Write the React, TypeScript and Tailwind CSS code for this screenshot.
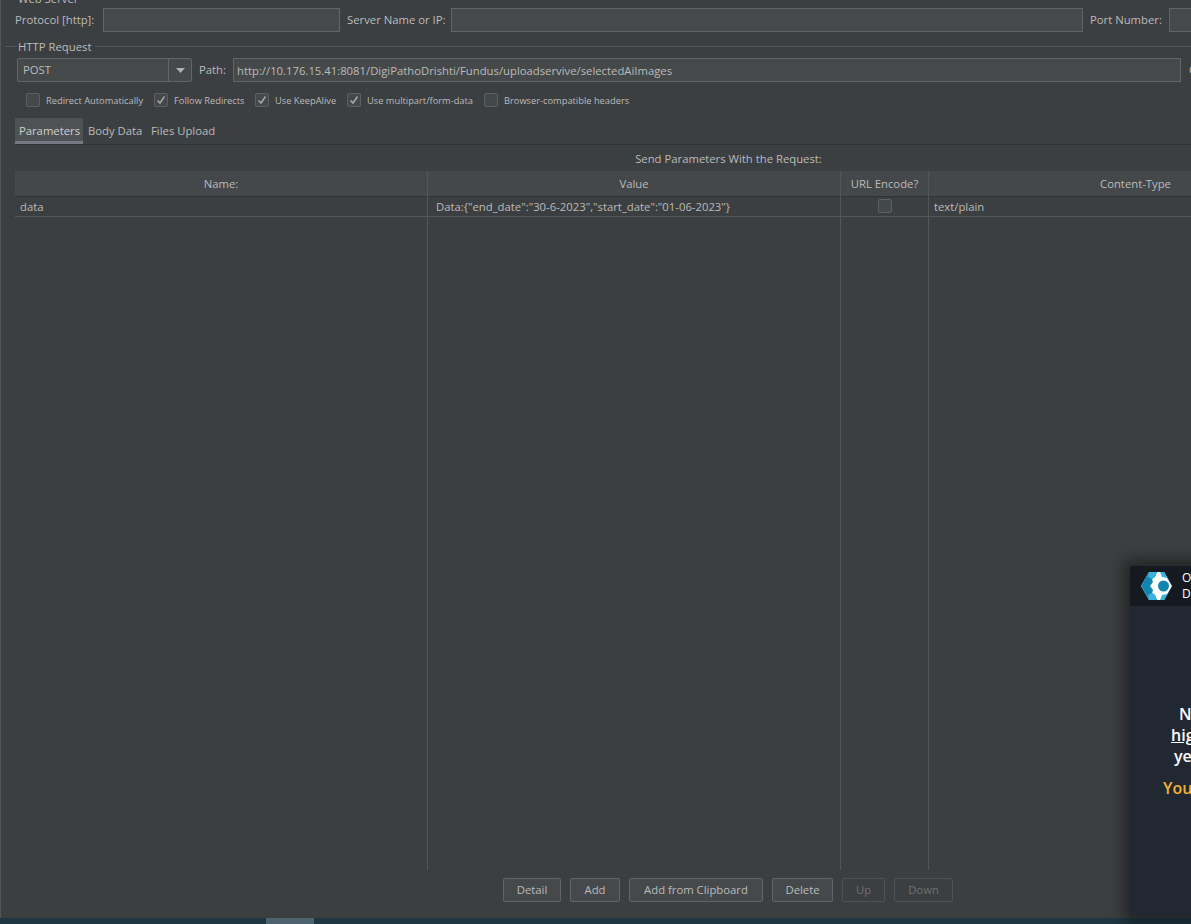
import { ChangeEvent } from "react";

const font = "font-['Open_Sans','Noto_Sans',sans-serif]";

const checks = [
  { label: "Redirect Automatically", on: false, width: "w-[128px]" },
  { label: "Follow Redirects", on: true, width: "w-[101px]" },
  { label: "Use KeepAlive", on: true, width: "w-[92px]" },
  { label: "Use multipart/form-data", on: true, width: "w-[137px]" },
  { label: "Browser-compatible headers", on: false, width: "w-[145px]" },
];

const buttons = [
  { label: "Detail", width: "w-[58px]" },
  { label: "Add", width: "w-[50px]" },
  { label: "Add from Clipboard", width: "w-[134px]" },
  { label: "Delete", width: "w-[61px]" },
  { label: "Up", width: "w-[43px]", off: true },
  { label: "Down", width: "w-[59px]", off: true },
];

function Box({ on }: { on: boolean }) {
  return (
    <span className="flex h-[14px] w-[14px] shrink-0 items-center justify-center rounded-[2px] border border-[#5e6060] bg-[#43494a]">
      {on && (
        <svg width="10" height="10" viewBox="0 0 10 10" fill="none">
          <path d="M1.5 5.5 L4 8 L8.5 1.5" stroke="#a7a7a7" strokeWidth="1.5" />
        </svg>
      )}
    </span>
  );
}

function Field({ className, value }: { className: string; value?: string }) {
  const noop = (_: ChangeEvent<HTMLInputElement>) => {};
  return (
    <input
      value={value ?? ""}
      onChange={noop}
      className={`h-6 shrink-0 border border-[#646464] bg-[#45494a] px-[3px] pt-[1px] text-[11.3px] text-[#bbbbbb] outline-none ${className}`}
    />
  );
}

export default function App() {
  return (
    <div className={`relative flex h-[924px] w-[1191px] flex-col overflow-hidden bg-[#3c3f41] text-[11.3px] text-[#bbbbbb] ${font}`}>
      <div className="flex h-[918px] flex-col border-l border-[#555555]">
        {/* web server group, cut off by the window edge */}
        <div className="h-2 shrink-0 overflow-hidden pl-[17px]">
          <div className="-mt-[7px] leading-[12px]">Web Server</div>
        </div>
        <div className="flex h-6 shrink-0 items-center whitespace-nowrap pl-[14px]">
          <span className="w-[88px] shrink-0 pt-[1px]">Protocol [http]:</span>
          <Field className="w-[237px]" />
          <span className="ml-[7px] w-[97px] shrink-0 pt-[1px]">Server Name or IP:</span>
          <Field className="ml-[7px] w-[632px]" />
          <span className="ml-[7px] w-[72px] shrink-0 pt-[1px]">Port Number:</span>
          <Field className="ml-[7px] w-[60px]" />
        </div>

        {/* http request group */}
        <div className="mt-[7px] flex h-[14px] shrink-0 items-center pl-[4px]">
          <span className="h-px w-3 bg-[#555555]" />
          <span className="px-[1px] pt-[3px]">HTTP Request</span>
          <span className="ml-[3px] h-px flex-1 bg-[#555555]" />
        </div>
        <div className="mt-[5px] flex h-6 shrink-0 items-center whitespace-nowrap pl-4">
          <div className="flex h-6 w-[175px] shrink-0 items-center rounded-[2px] border border-[#646464] bg-[#45494a]">
            <span className="flex-1 pl-[5px] pt-[1px]">POST</span>
            <span className="flex h-full w-[23px] items-center justify-center border-l border-[#646464]">
              <svg width="9" height="5" viewBox="0 0 9 5">
                <path d="M0 0 H9 L4.5 5 Z" fill="#b0b0b0" />
              </svg>
            </span>
          </div>
          <span className="ml-[7px] w-[34px] shrink-0 pt-[1px]">Path:</span>
          <Field className="w-[948px]" value="http://10.176.15.41:8081/DigiPathoDrishti/Fundus/uploadservive/selectedAiImages" />
          <span className="ml-[8px] shrink-0">C</span>
        </div>
        <div className="mt-[10px] flex h-[16px] shrink-0 items-center whitespace-nowrap pl-[25px] text-[9.3px]">
          {checks.map((c) => (
            <label key={c.label} className={`flex shrink-0 items-center gap-[6px] ${c.width}`}>
              <Box on={c.on} />
              <span className="pt-[1px]">{c.label}</span>
            </label>
          ))}
        </div>

        {/* tabs */}
        <div className="ml-[14px] mt-[10px] flex h-[27px] shrink-0 items-stretch border-b border-[#323232]">
          <span className="flex w-[68px] items-center justify-center border-b-[3px] border-[#747a80] bg-[#4e5254] pl-[1px] pt-[3px] text-[#d0d0d0]">Parameters</span>
          <span className="flex w-[63px] items-center pl-[5px] pt-[1px]">Body Data</span>
          <span className="flex items-center pl-[5px] pt-[1px]">Files Upload</span>
        </div>

        <div className="flex h-[26px] shrink-0 items-center justify-center pl-[265px] pt-[2px]">
          Send Parameters With the Request:
        </div>

        {/* parameter table */}
        <div className="ml-[14px] flex h-[699px] shrink-0">
          {[
            { head: "Name:", cell: "data", width: "w-[413px]" },
            { head: "Value", cell: 'Data:{"end_date":"30-6-2023","start_date":"01-06-2023"}', width: "w-[413px]", pad: "pl-[8px]" },
            { head: "URL Encode?", box: true, width: "w-[88px]" },
            { head: "Content-Type", cell: "text/plain", width: "w-[263px]", pad: "pl-[4px]", headPad: "pl-[151px]" },
          ].map((col) => (
            <div key={col.head} className={`flex shrink-0 flex-col border-r border-[#555555] ${col.width}`}>
              <div className={`flex h-[26px] items-center justify-center whitespace-nowrap border-b border-[#323232] bg-[#45484a] pt-[2px] ${col.headPad ?? ""}`}>
                {col.head}
              </div>
              <div className={`flex h-[20px] items-center border-b border-[#555555] ${col.box ? "justify-center pb-[2px]" : "pl-[5px] pt-[1px]"} ${col.pad ?? ""}`}>
                {col.box ? <Box on={false} /> : col.cell}
              </div>
            </div>
          ))}
        </div>

        {/* table buttons */}
        <div className="mt-[8px] flex h-6 shrink-0 justify-center gap-[9px] pl-[264px]">
          {buttons.map((b) => (
            <span
              key={b.label}
              className={`flex items-center justify-center rounded-[2px] border pt-[1px] ${b.width} ${
                b.off ? "border-[#4e5254] text-[#6f7173]" : "border-[#646464] bg-[#45494b]"
              }`}
            >
              {b.label}
            </span>
          ))}
        </div>
      </div>

      {/* window behind, bottom strip */}
      <div className="flex h-[6px] shrink-0 bg-[#1f3743]">
        <span className="ml-[266px] w-[48px] bg-[#4c626d]" />
      </div>

      {/* notification popup clipped by the right edge */}
      <div className="absolute left-[1130px] top-[566px] h-[350px] w-[300px] bg-[#222831] text-white shadow-[0_0_14px_6px_rgba(0,0,0,0.45)]">
        <div className="flex h-[40px] items-center bg-[#151a21] pl-[11px]">
          <svg width="31" height="28" viewBox="0 0 31 28">
            <path d="M8 0 H23 L31 14 L23 28 H8 L0 14 Z" fill="#ffffff" />
            <path d="M8 0 H16 L14 5 L11 7 L12 10 L9 14 L12 18 L11 21 L14 23 L16 28 H8 L0 14 Z" fill="#0e86b0" />
            <path d="M8 0 H16 L14 5 L11 7 L7 5 Z" fill="#38b4de" />
            <path d="M8 28 H16 L14 23 L11 21 L7 23 Z" fill="#38b4de" />
            <path d="M19 0 H23 L29 10 L26 6 L21 5 Z" fill="#38b4de" />
            <path d="M19 28 H23 L29 18 L26 22 L21 23 Z" fill="#38b4de" />
            <circle cx="22.5" cy="14" r="5.5" fill="#0e86b0" />
          </svg>
          <div className="ml-[10px] text-xs leading-[16px]">
            <div>O</div>
            <div>D</div>
          </div>
        </div>
        <div className="pt-[98px] text-base font-semibold leading-[21px]">
          <div className="ml-[49px]">N</div>
          <div className="ml-[41px] underline">hig</div>
          <div className="ml-[44px]">ye</div>
          <div className="ml-[33px] mt-[11px] text-[#f2b134]">You</div>
        </div>
      </div>
    </div>
  );
}
